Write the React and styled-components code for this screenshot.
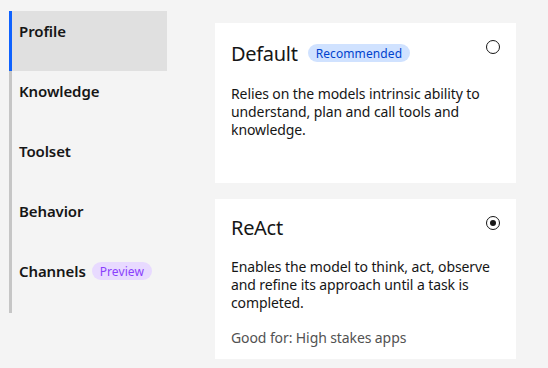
import React from 'react';
import styled, { createGlobalStyle } from 'styled-components';

const GlobalStyle = createGlobalStyle`
  html, body {
    margin: 0;
    padding: 0;
    background: #f4f4f4;
    font-family: "Noto Sans", "Liberation Sans", sans-serif;
    color: #161616;
  }
`

const Page = styled.div`
  display: flex;
  align-items: flex-start;
  gap: 48px;
  padding: 11px 0 0 9px;
  width: 548px;
  height: 368px;
  box-sizing: border-box;
`

const Nav = styled.nav`
  display: flex;
  flex-direction: column;
  width: 158px;
  height: 302px;
  border-left: 3px solid #c6c6c6;
  box-sizing: border-box;
`

const NavItem = styled.div`
  position: relative;
  height: 60px;
  padding: 9px 0 0 7px;
  box-sizing: border-box;
  background: ${({ active }) => (active ? '#e0e0e0' : 'transparent')};
  &::before {
    content: '';
    display: ${({ active }) => (active ? 'block' : 'none')};
    position: absolute;
    left: -3px;
    top: 0;
    bottom: 0;
    width: 3px;
    background: #0f62fe;
  }
`

const NavLabel = styled.div`
  display: flex;
  align-items: center;
  gap: 6px;
  height: 22px;
  font-size: 15px;
  font-weight: 600;
  letter-spacing: -0.1px;
`

const Tag = styled.span`
  display: inline-flex;
  align-items: center;
  height: 18px;
  padding: 0 8px;
  border-radius: 9px;
  font-size: 12px;
  font-weight: 400;
  letter-spacing: 0.1px;
  background: ${({ bg }) => bg};
  color: ${({ fg }) => fg};
`

const Cards = styled.div`
  display: flex;
  flex-direction: column;
  gap: 16px;
  padding-top: 12px;
`

const Card = styled.div`
  width: 301px;
  height: 160px;
  box-sizing: border-box;
  background: #ffffff;
  padding: 15px 16px 16px 16px;
  display: flex;
  flex-direction: column;
`

const CardHead = styled.div`
  display: flex;
  align-items: center;
  gap: 10px;
  height: 30px;
`

const CardTitle = styled.div`
  font-size: 20px;
  font-weight: 400;
  letter-spacing: -0.3px;
`

const Radio = styled.span`
  margin-left: auto;
  align-self: flex-start;
  margin-top: 2px;
  width: 14px;
  height: 14px;
  box-sizing: border-box;
  border: 1px solid #161616;
  border-radius: 50%;
  display: flex;
  align-items: center;
  justify-content: center;
  &::after {
    content: '';
    display: ${({ checked }) => (checked ? 'block' : 'none')};
    width: 6px;
    height: 6px;
    border-radius: 50%;
    background: #161616;
  }
`

const Desc = styled.p`
  margin: 17px 0 0 0;
  font-size: 14px;
  line-height: 18px;
  letter-spacing: -0.1px;
`

const Note = styled.p`
  margin: 17px 0 0 0;
  font-size: 14px;
  line-height: 18px;
  letter-spacing: -0.1px;
  color: #525252;
`

const navItems = ['Profile', 'Knowledge', 'Toolset', 'Behavior', 'Channels'];

const App = () => {
  return (
    <>
      <GlobalStyle />
      <Page>
        <Nav>
          {navItems.map((item, i) => (
            <NavItem key={item} active={i === 0}>
              <NavLabel>
                {item}
                {item === 'Channels' && (
                  <Tag bg="#e8daff" fg="#8a3ffc">Preview</Tag>
                )}
              </NavLabel>
            </NavItem>
          ))}
        </Nav>
        <Cards>
          <Card>
            <CardHead>
              <CardTitle>Default</CardTitle>
              <Tag bg="#d0e2ff" fg="#0043ce">Recommended</Tag>
              <Radio />
            </CardHead>
            <Desc>
              Relies on the models intrinsic ability to understand, plan and call tools and knowledge.
            </Desc>
          </Card>
          <Card>
            <CardHead>
              <CardTitle>ReAct</CardTitle>
              <Radio checked />
            </CardHead>
            <Desc>
              Enables the model to think, act, observe and refine its approach until a task is completed.
            </Desc>
            <Note>Good for: High stakes apps</Note>
          </Card>
        </Cards>
      </Page>
    </>
  );
};

export default App;
